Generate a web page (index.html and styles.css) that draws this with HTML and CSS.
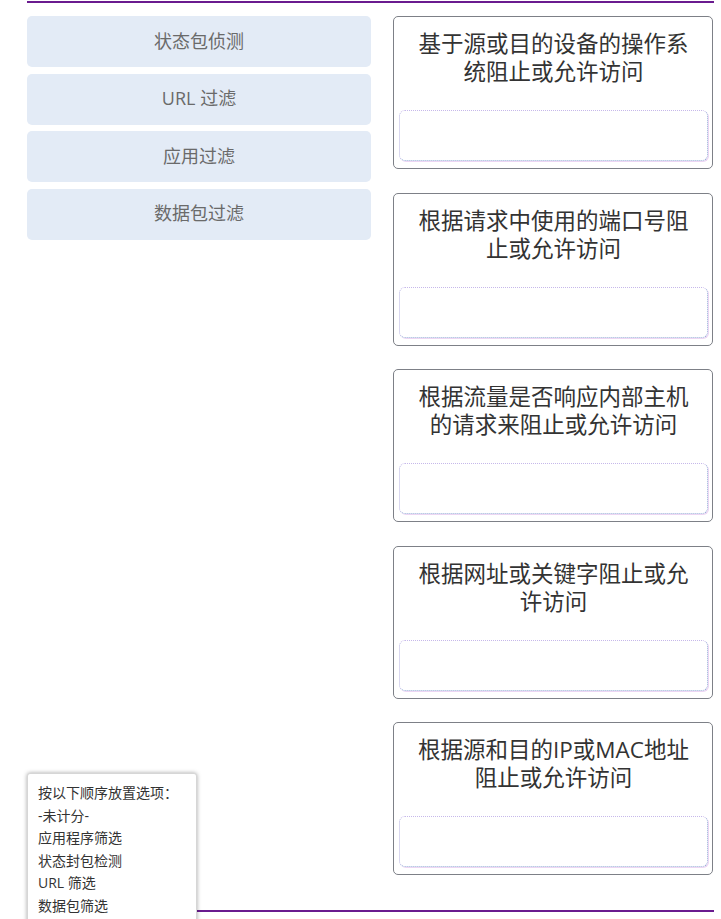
FILE: index.html
```html
<!DOCTYPE html>
<html lang="zh-CN">
<head>
  <meta charset="UTF-8">
  <meta name="viewport" content="width=device-width, initial-scale=1.0">
  <title>匹配题</title>
  <link rel="stylesheet" href="styles.css">
</head>
<body>
<div class="page">
  <div class="rule"></div>

  <div class="match">
    <div class="options">
      <div class="option">状态包侦测</div>
      <div class="option">URL 过滤</div>
      <div class="option">应用过滤</div>
      <div class="option">数据包过滤</div>
    </div>

    <div class="targets">
      <div class="target">
        <div class="target-title">基于源或目的设备的操作系统阻止或允许访问</div>
        <div class="drop-zone"></div>
      </div>
      <div class="target">
        <div class="target-title">根据请求中使用的端口号阻止或允许访问</div>
        <div class="drop-zone"></div>
      </div>
      <div class="target">
        <div class="target-title">根据流量是否响应内部主机的请求来阻止或允许访问</div>
        <div class="drop-zone"></div>
      </div>
      <div class="target">
        <div class="target-title">根据网址或关键字阻止或允许访问</div>
        <div class="drop-zone"></div>
      </div>
      <div class="target">
        <div class="target-title">根据源和目的IP或MAC地址阻止或允许访问</div>
        <div class="drop-zone"></div>
      </div>
    </div>
  </div>

  <div class="rule rule-bottom"></div>

  <!-- answer tooltip -->
  <div class="tooltip">
    <div>按以下顺序放置选项：</div>
    <div>-未计分-</div>
    <div>应用程序筛选</div>
    <div>状态封包检测</div>
    <div>URL 筛选</div>
    <div>数据包筛选</div>
  </div>
</div>
</body>
</html>
```

FILE: styles.css
```css
* {
  margin: 0;
  padding: 0;
  box-sizing: border-box;
}

body {
  font-family: "Open Sans", "Noto Sans CJK SC", sans-serif;
  background: #ffffff;
  color: #333333;
  overflow: hidden;
}

.page {
  position: relative;
  padding: 1px 7px 0 27px;
  height: 919px;
}

.rule {
  height: 2px;
  background: #6a1b8f;
}

.rule-bottom {
  margin-top: 35px;
}

.match {
  display: flex;
  gap: 22px;
  margin-top: 13px;
}

/* Draggable options */
.options {
  width: 344px;
  display: flex;
  flex-direction: column;
  gap: 6.5px;
  align-self: flex-start;
}

.option {
  height: 51px;
  padding-bottom: 4px;
  background: #e3ebf6;
  border-radius: 5px;
  color: #6a6a6a;
  font-size: 18px;
  display: flex;
  align-items: center;
  justify-content: center;
}

/* Drop targets */
.targets {
  width: 320px;
  display: flex;
  flex-direction: column;
  gap: 23.5px;
}

.target {
  height: 153px;
  border: 1px solid #7d8087;
  border-radius: 5px;
  display: flex;
  flex-direction: column;
  padding: 0 4px 7px 5px;
}

.target-title {
  font-size: 22.5px;
  line-height: 28px;
  text-align: center;
  color: #333333;
  padding: 13px 10px 0;
}

.drop-zone {
  margin-top: auto;
  height: 51px;
  border: 1px dotted #94acd6;
  border-top-color: #c6b8ea;
  border-left-color: #b3b0e0;
  border-radius: 6px;
  box-shadow: 1px 1px 0 #ecd6f3;
}

/* Answer tooltip */
.tooltip {
  position: absolute;
  left: 27px;
  top: 773px;
  width: 170px;
  height: 160px;
  background: #ffffff;
  border: 1px solid #d6d6d6;
  border-radius: 3px;
  box-shadow: 0 0 4px rgba(0, 0, 0, 0.35);
  padding: 8px 10px;
  font-size: 14px;
  line-height: 22.5px;
  color: #333333;
}
```
